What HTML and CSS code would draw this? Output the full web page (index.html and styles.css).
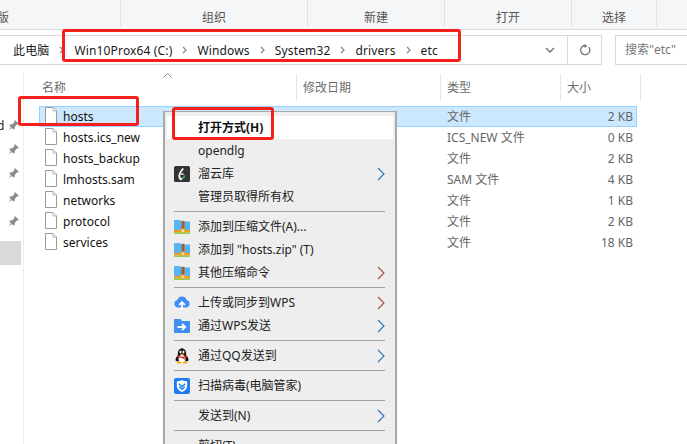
FILE: index.html
```html
<!DOCTYPE html>
<html lang="zh">
<head>
<meta charset="utf-8">
<title>etc</title>
<link rel="stylesheet" href="styles.css">
</head>
<body>
<svg class="defs" width="0" height="0">
  <defs>
    <symbol id="doc" viewBox="0 0 12 17"><path d="M.5.5h7.500l3.500 3.500v12.500H.5z" fill="#fff" stroke="#9a9a9a"/><path d="M8 .5V4h3.500" fill="#f0f0f0" stroke="#b5b5b5"/></symbol>
    <symbol id="pin" viewBox="0 0 12 12"><path d="M7 1l4 4-1 .6-1.600.2L6.800 8l-.3 2-1.300.6L3.900 9 1.300 11 1 10.700 3 8.100 1.400 6.800 2 5.500l2-.3 2.200-1.600.2-1.600z" fill="#8c8c8c"/></symbol>
    <symbol id="chev" viewBox="0 0 8 14"><path d="M1 1l6 6-6 6" fill="none" stroke="currentColor" stroke-width="1.100"/></symbol>
    <symbol id="crumb" viewBox="0 0 5 8"><path d="M1 1l3 3-3 3" fill="none" stroke="#8a8a8a" stroke-width="1.300"/></symbol>
    <symbol id="rar" viewBox="0 0 16 16"><path d="M0 1h6l1.500 1.500H16V11H0z" fill="#58b4f5"/><path d="M0 11h16v2.300H0z" fill="#f59a1b"/><path d="M0 13.300h16V15H0z" fill="#8ccf4d"/><path d="M7.500 1.800h3V10h-3z" fill="#a5602a"/><path d="M6.500 9.500h5V14h-5z" fill="#e9a83c"/><path d="M7.800 10.800h2.400v2H7.800z" fill="#fbe7b5"/></symbol>
  </defs>
</svg>
<div class="window">
  <header class="ribbon">
    <div class="group g-clip"><span class="cut">版</span></div>
    <div class="group g-org">组织</div>
    <div class="group g-new">新建</div>
    <div class="group g-open">打开</div>
    <div class="group g-sel">选择</div>
    <div class="group g-rest"></div>
  </header>

  <nav class="addressrow">
    <div class="crumbs">
      <span>此电脑</span>
      <svg class="sep"><use href="#crumb"/></svg><span>Win10Prox64 (C:)</span>
      <svg class="sep"><use href="#crumb"/></svg><span>Windows</span>
      <svg class="sep"><use href="#crumb"/></svg><span>System32</span>
      <svg class="sep"><use href="#crumb"/></svg><span>drivers</span>
      <svg class="sep"><use href="#crumb"/></svg><span>etc</span>
      <svg class="drop" viewBox="0 0 10 6"><path d="M1 1l4 4 4-4" fill="none" stroke="#777" stroke-width="1.500"/></svg>
    </div>
    <div class="refresh">
      <svg viewBox="0 0 12 12" width="12" height="12"><path d="M9.800 3.200A4.600 4.600 0 1 1 6 1.500" fill="none" stroke="#777" stroke-width="1.300"/><path d="M5.500 0v4l3-2z" fill="#777"/></svg>
    </div>
    <div class="search">搜索"etc"</div>
  </nav>

  <main class="body">
    <aside class="tree">
      <span class="tree-cut">d</span>
      <div class="pins">
        <svg><use href="#pin"/></svg>
        <svg><use href="#pin"/></svg>
        <svg><use href="#pin"/></svg>
        <svg><use href="#pin"/></svg>
        <svg><use href="#pin"/></svg>
      </div>
      <div class="tree-sel"></div>
    </aside>
    <section class="files">
      <svg class="sort" viewBox="0 0 9 5"><path d="M.5 4.500l4-4 4 4" fill="none" stroke="#888"/></svg>
      <div class="head">
        <div class="hc c-name">名称</div>
        <div class="hc c-date">修改日期</div>
        <div class="hc c-type">类型</div>
        <div class="hc c-size">大小</div>
      </div>
      <div class="row selected"><div class="name"><svg class="doc"><use href="#doc"/></svg>hosts</div><div class="type">文件</div><div class="size">2 KB</div></div>
      <div class="row"><div class="name"><svg class="doc"><use href="#doc"/></svg>hosts.ics_new</div><div class="type">ICS_NEW 文件</div><div class="size">0 KB</div></div>
      <div class="row"><div class="name"><svg class="doc"><use href="#doc"/></svg>hosts_backup</div><div class="type">文件</div><div class="size">2 KB</div></div>
      <div class="row"><div class="name"><svg class="doc"><use href="#doc"/></svg>lmhosts.sam</div><div class="type">SAM 文件</div><div class="size">4 KB</div></div>
      <div class="row"><div class="name"><svg class="doc"><use href="#doc"/></svg>networks</div><div class="type">文件</div><div class="size">1 KB</div></div>
      <div class="row"><div class="name"><svg class="doc"><use href="#doc"/></svg>protocol</div><div class="type">文件</div><div class="size">2 KB</div></div>
      <div class="row"><div class="name"><svg class="doc"><use href="#doc"/></svg>services</div><div class="type">文件</div><div class="size">18 KB</div></div>
    </section>
  </main>

  <div class="menu">
    <div class="mi hover"><span class="ic"></span><b>打开方式(H)</b></div>
    <div class="mi"><span class="ic"></span>opendlg</div>
    <div class="mi"><span class="ic"><svg viewBox="0 0 16 16"><rect width="16" height="16" rx="1.500" fill="#333"/><path d="M9.300 2.500C7 5 5.300 7.500 5.300 10c0 2 1.200 3.300 2.700 3.300" fill="none" stroke="#fff" stroke-width="1.800"/><path d="M7 8.500c1-.9 2-.9 2.600 0" fill="none" stroke="#fff" stroke-width="1.200"/><path d="M8 13.300c1.800 0 3-1.300 3-2.800 0-.8-.4-1.500-1-1.900.2 1.500-.5 2.700-2 3z" fill="#2fb457"/></svg></span>溜云库<svg class="chev blue"><use href="#chev"/></svg></div>
    <div class="mi"><span class="ic"></span>管理员取得所有权</div>
    <hr>
    <div class="mi"><span class="ic"><svg><use href="#rar"/></svg></span>添加到压缩文件(A)...</div>
    <div class="mi"><span class="ic"><svg><use href="#rar"/></svg></span>添加到 "hosts.zip" (T)</div>
    <div class="mi"><span class="ic"><svg><use href="#rar"/></svg></span>其他压缩命令<svg class="chev red"><use href="#chev"/></svg></div>
    <hr>
    <div class="mi"><span class="ic"><svg viewBox="0 0 16 16"><path d="M4 12.500a3.800 3.800 0 0 1-.6-7.500 4.800 4.800 0 0 1 9.200 0 3.800 3.800 0 0 1-.6 7.500z" fill="#3f8ef2"/><path d="M8 15V7.500M5.200 10L8 7l2.800 3" fill="none" stroke="#fff" stroke-width="1.800"/></svg></span>上传或同步到WPS<svg class="chev red"><use href="#chev"/></svg></div>
    <div class="mi"><span class="ic"><svg viewBox="0 0 16 16"><path d="M0 1h6.500L8 3h8v12H0z" fill="#3f8ef2"/><path d="M3.500 9h7.500M8 5.800L11.200 9 8 12.200" fill="none" stroke="#fff" stroke-width="1.800"/></svg></span>通过WPS发送<svg class="chev blue"><use href="#chev"/></svg></div>
    <hr>
    <div class="mi"><span class="ic"><svg viewBox="0 0 16 16"><ellipse cx="8" cy="5.500" rx="4.200" ry="5.200" fill="#111"/><path d="M3.500 7.500C1.500 10 1 12.500 2 13l2 .2h8l2-.2c1-.5.500-3-1.500-5.500z" fill="#111"/><ellipse cx="8" cy="10.800" rx="3.500" ry="3.700" fill="#fff"/><ellipse cx="6.500" cy="4" rx="1" ry="1.400" fill="#fff"/><ellipse cx="9.500" cy="4" rx="1" ry="1.400" fill="#fff"/><path d="M5.500 5.800h5L8 7.300z" fill="#f5b400"/><path d="M3.300 7.500c3 1.600 6.400 1.600 9.400 0l.2 1.700-2.400.8.300 2-2-1.800C6.500 10.100 4.800 9.800 3.300 9z" fill="#e0201b"/><ellipse cx="5" cy="14.500" rx="2.500" ry="1.100" fill="#f5a800"/><ellipse cx="11" cy="14.500" rx="2.500" ry="1.100" fill="#f5a800"/></svg></span>通过QQ发送到<svg class="chev blue"><use href="#chev"/></svg></div>
    <hr>
    <div class="mi"><span class="ic"><svg viewBox="0 0 16 16"><rect width="16" height="16" rx="2" fill="#1d7cf2"/><path d="M8 2c1.700 1 3.500 1.300 5.200 1.400v4.300c0 2.800-2.100 5-5.200 6.300-3.100-1.300-5.200-3.500-5.200-6.300V3.400C4.500 3.300 6.300 3 8 2z" fill="#fff"/><path d="M4.800 5.800L8 8.800l3.200-3M5.200 8.800L8 11.300l2.800-2.500" fill="none" stroke="#1d7cf2" stroke-width="1.300"/></svg></span>扫描病毒(电脑管家)</div>
    <hr>
    <div class="mi"><span class="ic"></span>发送到(N)<svg class="chev blue"><use href="#chev"/></svg></div>
    <hr>
    <div class="mi"><span class="ic"></span>剪切(T)</div>
  </div>

  <div class="mark mark-path"></div>
  <div class="mark mark-file"></div>
  <div class="mark mark-open"></div>
</div>
</body>
</html>
```

FILE: styles.css
```css
* { box-sizing: border-box; }
html, body { margin: 0; height: 100%; overflow: hidden; }
body { background: #fff; color: #1a1a1a; font: 12px/21px "Noto Sans", "Noto Sans CJK SC", sans-serif; }
.defs { position: absolute; }
.window { position: relative; width: 687px; height: 444px; overflow: hidden; }

/* ribbon */
.ribbon { display: flex; height: 30px; background: #f5f6f7; border-bottom: 1px solid #dadbdc; }
.group { display: flex; justify-content: center; height: 26px; padding-top: 7px; color: #555; border-right: 1px solid #e1e2e3; line-height: 21px; }
.g-clip { width: 121px; justify-content: flex-start; overflow: hidden; }
.cut { margin-left: -3px; }
.g-org { width: 187px; }
.g-new { width: 137px; }
.g-open { width: 127px; }
.g-sel { width: 85px; }
.g-rest { flex: 1; border-right: 0; }

/* address */
.addressrow { display: flex; height: 42px; padding-top: 5px; padding-bottom: 7px; }
.crumbs { display: flex; align-items: center; width: 568px; padding-left: 13px; border: 1px solid #d9d9d9; border-left: 0; letter-spacing: .15px; }
.crumbs .sep { width: 5px; height: 8px; margin: 0 10px; flex: none; }
.drop { width: 10px; height: 6px; margin-left: auto; margin-right: 12px; }
.refresh { display: flex; align-items: center; justify-content: center; width: 34px; border: 1px solid #d9d9d9; border-left: 0; }
.search { flex: 1; margin-left: 13px; padding-left: 9px; line-height: 28px; color: #777; border: 1px solid #d9d9d9; border-right: 0; }

/* body */
.body { display: flex; height: 372px; }
.tree { position: relative; width: 24px; border-right: 1px solid #eeeeee; flex: none; }
.tree-cut { position: absolute; left: -3px; top: 43px; }
.pins { display: flex; flex-direction: column; gap: 12px; padding: 47px 0 0 8px; }
.pins svg { width: 12px; height: 12px; display: block; }
.tree-sel { height: 24px; width: 21px; margin-top: 14px; background: #d9d9d9; }

.files { position: relative; flex: 1; }
.sort { position: absolute; left: 139px; top: 1px; width: 9px; height: 5px; }
.head { display: flex; height: 34px; padding-left: 18px; color: #6d6d6d; padding-top: 2px; }
.hc { height: 27px; line-height: 27px; border-right: 1px solid #e5e5e5; flex: none; }
.c-name { width: 255px; }
.c-date { width: 144px; padding-left: 6px; }
.c-type { width: 120px; padding-left: 6px; }
.c-size { width: 80px; padding-left: 6px; }

.row { display: grid; grid-template-columns: 407px 138px 48px; margin-left: 15px; width: 598px; height: 21px; border: 1px solid transparent; }
.selected { background: #cce8ff; border-color: #99d1ff; }
.name { display: flex; align-items: flex-start; padding-left: 5px; color: #111; line-height: 19px; }
.doc { width: 12px; height: 17px; margin-right: 6px; flex: none; }
.type, .size { color: #666; line-height: 20px; }
.size { text-align: right; }

/* context menu */
.menu { position: absolute; left: 163px; top: 111px; width: 234px; height: 345px; padding: 4px 2px; background: #eeeeee; border: 2px solid #a8a8a8; border-width: 1px 2px 0; }
.mi { display: flex; align-items: center; height: 23px; color: #222; }
.hover { background: #fff; }
.hover b { color: #111; }
.ic { display: flex; align-items: center; justify-content: flex-start; width: 31px; padding-left: 7px; flex: none; }
.ic svg { width: 16px; height: 16px; display: block; }
.chev { width: 8px; height: 14px; margin-left: auto; margin-right: 8px; }
.blue { color: #2f6fb5; }
.red { color: #a5453a; }
.menu hr { height: 1px; margin: 3px 8px 3px 7px; border: 0; background: #a0a0a0; }

/* red annotation boxes */
.mark { position: absolute; border: 3px solid #f5201c; border-radius: 3px; }
.mark-path { left: 62px; top: 29px; width: 399px; height: 33px; }
.mark-file { left: 18px; top: 96px; width: 121px; height: 30px; }
.mark-open { left: 172px; top: 107px; width: 102px; height: 33px; }
```
